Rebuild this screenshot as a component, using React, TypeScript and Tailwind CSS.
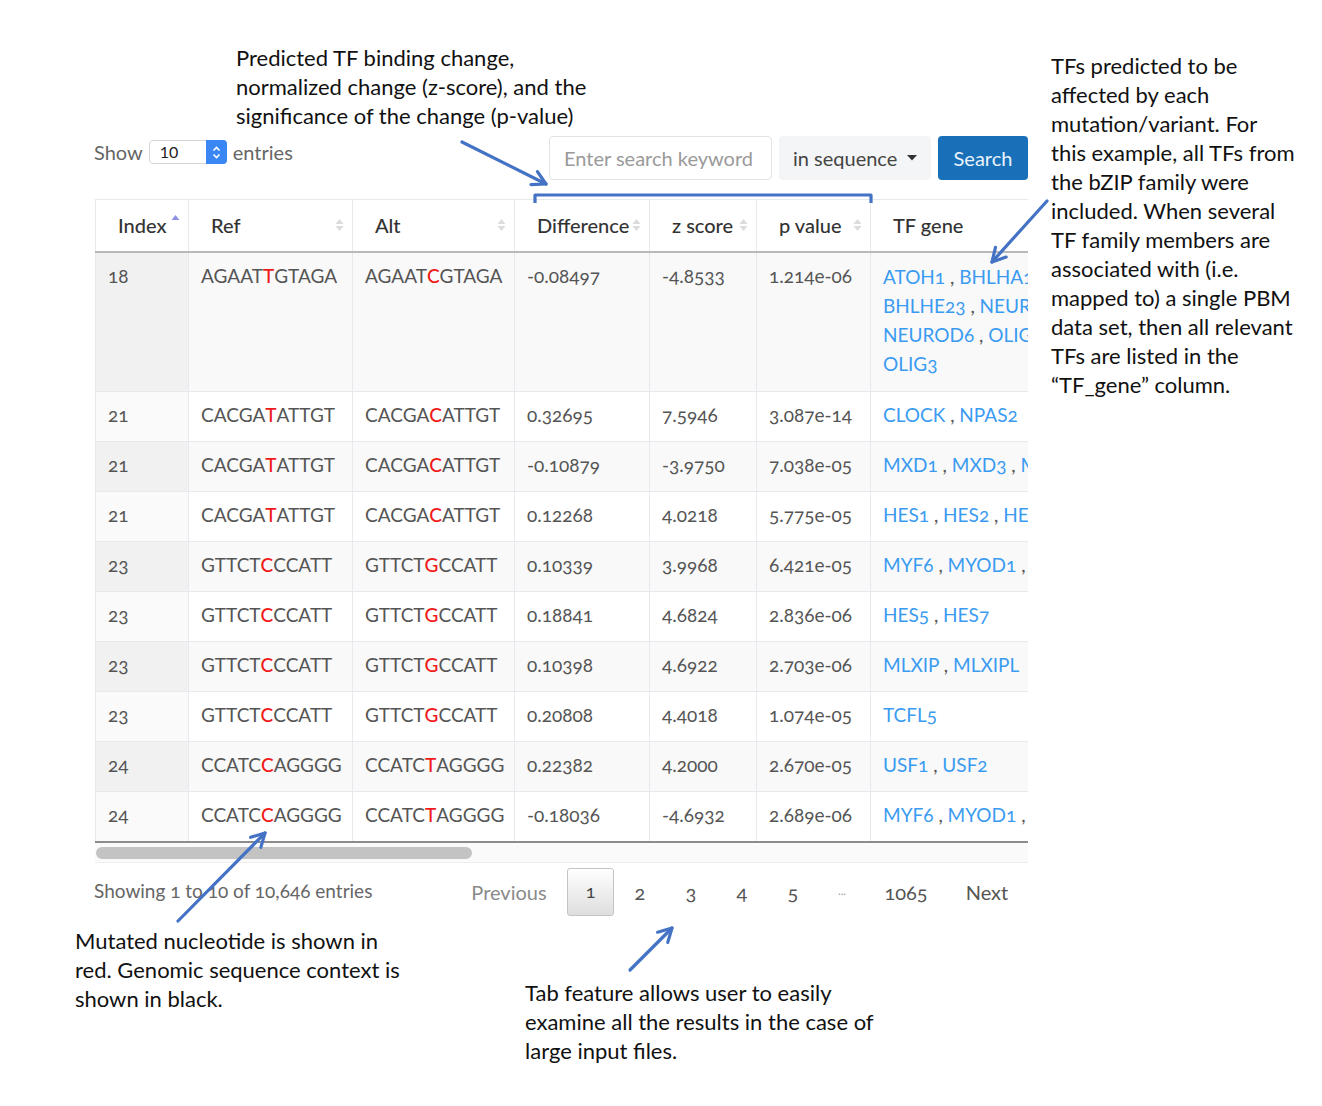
import React from "react";

type Seq = [string, string, string];

interface Row {
  idx: string;
  ref: Seq;
  alt: Seq;
  diff: string;
  z: string;
  p: string;
  tf: string[][];
}

const rows: Row[] = [
  {
    idx: "18",
    ref: ["AGAAT", "T", "GTAGA"],
    alt: ["AGAAT", "C", "GTAGA"],
    diff: "-0.08497",
    z: "-4.8533",
    p: "1.214e-06",
    tf: [
      ["ATOH1", "BHLHA15", "BHLHE22"],
      ["BHLHE23", "NEUROD1", "NEUROD2"],
      ["NEUROD6", "OLIG1", "OLIG2"],
      ["OLIG3"],
    ],
  },
  { idx: "21", ref: ["CACGA", "T", "ATTGT"], alt: ["CACGA", "C", "ATTGT"], diff: "0.32695", z: "7.5946", p: "3.087e-14", tf: [["CLOCK", "NPAS2"]] },
  { idx: "21", ref: ["CACGA", "T", "ATTGT"], alt: ["CACGA", "C", "ATTGT"], diff: "-0.10879", z: "-3.9750", p: "7.038e-05", tf: [["MXD1", "MXD3", "MXD4", "MXI1"]] },
  { idx: "21", ref: ["CACGA", "T", "ATTGT"], alt: ["CACGA", "C", "ATTGT"], diff: "0.12268", z: "4.0218", p: "5.775e-05", tf: [["HES1", "HES2", "HES5"]] },
  { idx: "23", ref: ["GTTCT", "C", "CCATT"], alt: ["GTTCT", "G", "CCATT"], diff: "0.10339", z: "3.9968", p: "6.421e-05", tf: [["MYF6", "MYOD1", "MYOG"]] },
  { idx: "23", ref: ["GTTCT", "C", "CCATT"], alt: ["GTTCT", "G", "CCATT"], diff: "0.18841", z: "4.6824", p: "2.836e-06", tf: [["HES5", "HES7"]] },
  { idx: "23", ref: ["GTTCT", "C", "CCATT"], alt: ["GTTCT", "G", "CCATT"], diff: "0.10398", z: "4.6922", p: "2.703e-06", tf: [["MLXIP", "MLXIPL"]] },
  { idx: "23", ref: ["GTTCT", "C", "CCATT"], alt: ["GTTCT", "G", "CCATT"], diff: "0.20808", z: "4.4018", p: "1.074e-05", tf: [["TCFL5"]] },
  { idx: "24", ref: ["CCATC", "C", "AGGGG"], alt: ["CCATC", "T", "AGGGG"], diff: "0.22382", z: "4.2000", p: "2.670e-05", tf: [["USF1", "USF2"]] },
  { idx: "24", ref: ["CCATC", "C", "AGGGG"], alt: ["CCATC", "T", "AGGGG"], diff: "-0.18036", z: "-4.6932", p: "2.689e-06", tf: [["MYF6", "MYOD1", "MYOG"]] },
];

const headers = [
  { label: "Index", sort: "asc" },
  { label: "Ref", sort: "both" },
  { label: "Alt", sort: "both" },
  { label: "Difference", sort: "both" },
  { label: "z score", sort: "both" },
  { label: "p value", sort: "both" },
  { label: "TF gene", sort: "none" },
];

function SortIcon({ kind }: { kind: string }) {
  if (kind === "none") return null;
  if (kind === "asc") {
    return (
      <svg width="9" height="14" viewBox="0 0 9 14" className="shrink-0 -translate-y-[4px]">
        <path d="M0.5 6 L4.5 1 L8.5 6 Z" fill="#8e92e2" />
      </svg>
    );
  }
  return (
    <svg width="9" height="14" viewBox="0 0 9 14" className="shrink-0">
      <path d="M0.5 6 L4.5 1 L8.5 6 Z" fill="#dcdcdc" />
      <path d="M0.5 8 L4.5 13 L8.5 8 Z" fill="#dcdcdc" />
    </svg>
  );
}

function SeqText({ s }: { s: Seq }) {
  return (
    <span className="whitespace-nowrap">
      {s[0]}
      <span className="font-medium text-[#f01a1a]">{s[1]}</span>
      {s[2]}
    </span>
  );
}

function TfLine({ genes, last }: { genes: string[]; last: boolean }) {
  return (
    <div className="whitespace-nowrap">
      {genes.map((g, i) => (
        <span key={g}>
          <span className="text-[#3a9bf1]">{g}</span>
          {(i < genes.length - 1 || !last) && <span className="text-[#555]"> , </span>}
        </span>
      ))}
    </div>
  );
}

function Arrow({ x1, y1, x2, y2 }: { x1: number; y1: number; x2: number; y2: number }) {
  const ang = Math.atan2(y2 - y1, x2 - x1);
  const len = 15;
  const spread = 0.5;
  const ax = x2 - len * Math.cos(ang - spread);
  const ay = y2 - len * Math.sin(ang - spread);
  const bx = x2 - len * Math.cos(ang + spread);
  const by = y2 - len * Math.sin(ang + spread);
  return (
    <g stroke="#4472c4" strokeWidth="3.2" fill="none" strokeLinecap="round" strokeLinejoin="round">
      <line x1={x1} y1={y1} x2={x2} y2={y2} />
      <polyline points={`${ax},${ay} ${x2},${y2} ${bx},${by}`} />
    </g>
  );
}

const note = "font-['Lato','Noto_Sans',sans-serif] text-[22px] leading-[29px] text-[#111]";

export default function App() {
  return (
    <div className="relative w-[1322px] h-[1106px] overflow-hidden bg-white">
      <svg className="pointer-events-none absolute inset-0 z-10" width="1322" height="1106">
        <Arrow x1={462} y1={142} x2={546} y2={184} />
        <path d="M535 203 V195 H871 V203" stroke="#4472c4" strokeWidth="3.2" fill="none" strokeLinejoin="round" />
        <Arrow x1={1047} y1={201} x2={992} y2={262} />
        <Arrow x1={178} y1={921} x2={265} y2={833} />
        <Arrow x1={630} y1={970} x2={672} y2={928} />
      </svg>

      <div className="flex">
        <div className="w-[1028px] shrink-0">
          <div className={`${note} pl-[236px] pt-[43px]`}>
            <div>Predicted TF binding change,</div>
            <div>normalized change (z-score), and the</div>
            <div>significance of the change (p-value)</div>
          </div>

          <div className="mt-[6px] flex items-start pl-[94px] font-['Lato',sans-serif] text-[20px] text-[#666]">
            <div className="mt-[1px] flex items-center">
              <span>Show</span>
              <div className="ml-[6px] flex h-[24px] w-[78px] items-center rounded-[4px] border border-[#d6d6d6] bg-white text-[16px] text-[#222]">
                <span className="flex-1 pl-[10px]">10</span>
                <div className="flex h-[24px] w-[21px] -mr-px flex-col items-center justify-center rounded-r-[4px] bg-[#3b86f5]">
                  <svg width="9" height="15" viewBox="0 0 9 15">
                    <path d="M1.5 5.5 L4.5 2.5 L7.5 5.5" stroke="white" strokeWidth="1.6" fill="none" />
                    <path d="M1.5 9.5 L4.5 12.5 L7.5 9.5" stroke="white" strokeWidth="1.6" fill="none" />
                  </svg>
                </div>
              </div>
              <span className="ml-[6px]">entries</span>
            </div>

            <div className="ml-auto flex gap-[7px]">
              <div className="flex h-[44px] w-[223px] items-center rounded-[4px] border border-[#e3e3e3] bg-white pl-[14px] text-[#9a9a9a]">
                Enter search keyword
              </div>
              <div className="flex h-[44px] w-[152px] items-center rounded-[4px] bg-[#f4f5f7] pl-[14px] text-[#444]">
                in sequence
                <svg width="10" height="6" viewBox="0 0 10 6" className="ml-[10px]">
                  <path d="M0 0 H10 L5 5.5 Z" fill="#333" />
                </svg>
              </div>
              <div className="flex h-[44px] w-[90px] items-center justify-center rounded-[4px] bg-[#1870b9] text-[#eaf2fb]">
                Search
              </div>
            </div>
          </div>

          <div className="ml-[95px] mt-[19px] w-[933px] overflow-hidden">
            <table className="w-[1050px] table-fixed border-collapse font-['Lato',sans-serif] text-[19px] oldstyle-nums text-[#555]">
              <colgroup>
                <col className="w-[93px]" />
                <col className="w-[164px]" />
                <col className="w-[162px]" />
                <col className="w-[135px]" />
                <col className="w-[107px]" />
                <col className="w-[114px]" />
                <col className="w-[275px]" />
              </colgroup>
              <thead>
                <tr className="h-[52px] border-t border-b-2 border-t-[#e6e9ed] border-b-[#b9b9b9]">
                  {headers.map(h => (
                    <th key={h.label} className="border-x border-[#e6e9ed] p-0 text-left font-medium text-[20px] text-[#333]">
                      <div className="flex items-center justify-between pl-[22px] pr-[8px]">
                        <span>{h.label}</span>
                        <SortIcon kind={h.sort} />
                      </div>
                    </th>
                  ))}
                </tr>
              </thead>
              <tbody>
                {rows.map((r, i) => {
                  const odd = i % 2 === 0;
                  const cell = "border-x border-t border-[#e6e9ed] px-3 pt-[9px] pb-[13px] align-top leading-[27px] whitespace-nowrap";
                  return (
                    <tr key={i} className={odd ? "bg-[#f9f9f9]" : "bg-white"}>
                      <td className={`${cell} ${odd ? "bg-[#f1f1f1]" : "bg-[#fafafa]"}`}>{r.idx}</td>
                      <td className={cell}><SeqText s={r.ref} /></td>
                      <td className={cell}><SeqText s={r.alt} /></td>
                      <td className={cell}>{r.diff}</td>
                      <td className={cell}>{r.z}</td>
                      <td className={cell}>{r.p}</td>
                      <td className={`${cell} ${r.tf.length > 1 ? "leading-[29px]" : ""}`}>
                        {r.tf.map((line, j) => (
                          <TfLine key={j} genes={line} last={j === r.tf.length - 1} />
                        ))}
                      </td>
                    </tr>
                  );
                })}
              </tbody>
            </table>
            <div className="border-t-2 border-[#8c8c8c]" />
            <div className="h-[20px] border-b border-[#eeeeee] bg-[#fafafa] pt-[4px] pl-px">
              <div className="h-[12px] w-[376px] rounded-full bg-[#c3c3c3]" />
            </div>
          </div>

          <div className="mt-[5px] flex h-[48px] items-center pl-[94px] font-['Lato',sans-serif] text-[19px] oldstyle-nums text-[#666]">
            <span>Showing 1 to 10 of 10,646 entries</span>
            <div className="ml-auto flex items-center text-[20px] text-[#555]">
              <span className="w-[98px] text-center text-[#8a8a8a]">Previous</span>
              <span className="ml-[9px] flex h-[48px] w-[47px] items-center justify-center rounded-[3px] border border-[#c4c4c4] bg-gradient-to-b from-white to-[#dedede] text-[18px] text-[#444]">1</span>
              <span className="w-[52px] text-center">2</span>
              <span className="w-[50px] text-center">3</span>
              <span className="w-[52px] text-center">4</span>
              <span className="w-[50px] text-center">5</span>
              <span className="w-[48px] text-center text-[11px] text-[#999]">...</span>
              <span className="w-[80px] text-center">1065</span>
              <span className="w-[82px] text-center">Next</span>
            </div>
          </div>

          <div className={`${note} flex`}>
            <div className="mt-[10px] w-[525px] shrink-0 pl-[75px]">
              <div>Mutated nucleotide is shown in</div>
              <div>red. Genomic sequence context is</div>
              <div>shown in black.</div>
            </div>
            <div className="mt-[62px]">
              <div>Tab feature allows user to easily</div>
              <div>examine all the results in the case of</div>
              <div>large input files.</div>
            </div>
          </div>
        </div>

        <div className={`${note} pl-[23px] pt-[51px] leading-[28.8px]`}>
          <div className="whitespace-nowrap">TFs predicted to be</div>
          <div className="whitespace-nowrap">affected by each</div>
          <div className="whitespace-nowrap">mutation/variant. For</div>
          <div className="whitespace-nowrap">this example, all TFs from</div>
          <div className="whitespace-nowrap">the bZIP family were</div>
          <div className="whitespace-nowrap">included. When several</div>
          <div className="whitespace-nowrap">TF family members are</div>
          <div className="whitespace-nowrap">associated with (i.e.</div>
          <div className="whitespace-nowrap">mapped to) a single PBM</div>
          <div className="whitespace-nowrap">data set, then all relevant</div>
          <div className="whitespace-nowrap">TFs are listed in the</div>
          <div className="whitespace-nowrap">“TF_gene” column.</div>
        </div>
      </div>
    </div>
  );
}
